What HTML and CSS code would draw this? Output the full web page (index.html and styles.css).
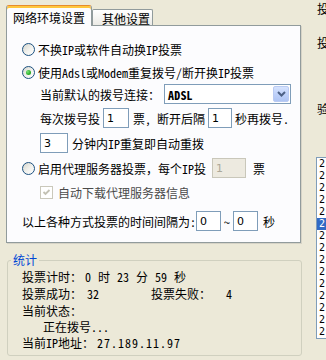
FILE: index.html
```html
<!DOCTYPE html>
<html lang="zh-CN">
<head>
<meta charset="utf-8">
<title>投票设置</title>
<link rel="stylesheet" href="styles.css">
</head>
<body>
<div class="app">
  <div class="left">
    <div class="tabs">
      <div class="tab tab-active">网络环境设置</div>
      <div class="tab tab-inactive">其他设置</div>
    </div>
    <div class="panel">
      <div class="row r1 ind-radio">
        <span class="radio"></span><span>不换IP或软件自动换IP投票</span>
      </div>
      <div class="row r2 ind-radio">
        <span class="radio on"></span><span>使用Adsl或Modem重复拨号/断开换IP投票</span>
      </div>
      <div class="row r3 ind-sub">
        <span>当前默认的拨号连接：</span>
        <div class="combo">
          <span class="combo-text">ADSL</span>
          <span class="combo-btn">
            <svg width="9" height="6" viewBox="0 0 9 6"><path d="M1 1 L4.5 4.5 L8 1" fill="none" stroke="#4D6185" stroke-width="2"/></svg>
          </span>
        </div>
      </div>
      <div class="row r4 ind-sub">
        <span>每次拨号投</span>
        <span class="input in-a">1</span>
        <span class="t-after">票, 断开后隔</span>
        <span class="input in-b">1</span>
        <span class="t-after2">秒再拨号.</span>
      </div>
      <div class="row r5 ind-sub">
        <span class="input in-c">3</span>
        <span class="t-after">分钟内IP重复即自动重拨</span>
      </div>
      <div class="row r6 ind-radio">
        <span class="radio"></span><span>启用代理服务器投票，每个IP投</span>
        <span class="input disabled in-d">1</span>
        <span class="t-piao">票</span>
      </div>
      <div class="row r7 ind-sub">
        <span class="check">
          <svg width="11" height="11" viewBox="0 0 11 11"><path d="M2.5 5 L4.5 7 L8.5 3" fill="none" stroke="#C3C1B4" stroke-width="1.8"/></svg>
        </span>
        <span class="t-dim">自动下载代理服务器信息</span>
      </div>
      <div class="row r8 ind-radio">
        <span>以上各种方式投票的时间间隔为:</span>
        <span class="input in-e">0</span>
        <span class="tilde">~</span>
        <span class="input in-e">0</span>
        <span class="t-sec">秒</span>
      </div>
    </div>
    <fieldset class="group">
      <legend>统计</legend>
      <div class="srow s1"><span class="lbl">投票计时：</span><span class="val v-time">0 时 23 分 59 秒</span></div>
      <div class="srow s2"><span class="lbl">投票成功：</span><span class="val v-ok">32</span><span class="lbl lbl-fail">投票失败：</span><span class="val v-fail">4</span></div>
      <div class="srow s3"><span class="lbl">当前状态：</span></div>
      <div class="srow s4"><span class="status">正在拨号...</span></div>
      <div class="srow s5"><span class="lbl">当前IP地址：</span><span class="val v-ip">27.189.11.97</span></div>
    </fieldset>
  </div>
  <div class="right">
    <div class="cut c1">投</div>
    <div class="cut c2">投</div>
    <div class="cut c3">验</div>
    <div class="listbox">
      <div class="item">2</div>
      <div class="item">2</div>
      <div class="item">2</div>
      <div class="item">2</div>
      <div class="item">2</div>
      <div class="item sel">2</div>
      <div class="item">2</div>
      <div class="item">2</div>
      <div class="item">2</div>
      <div class="item">2</div>
      <div class="item">2</div>
      <div class="item">2</div>
      <div class="item">2</div>
      <div class="item">2</div>
      <div class="item">2</div>
    </div>
  </div>
</div>
</body>
</html>
```
FILE: styles.css
```css
* { box-sizing: border-box; }
html, body { margin: 0; padding: 0; }
body {
  width: 326px;
  height: 360px;
  overflow: hidden;
  background: #ECE9D8;
  font-family: "Noto Sans Mono CJK SC", "Noto Sans CJK SC", monospace;
  font-size: 12px;
  color: #000;
}
.app { display: flex; align-items: flex-start; width: 326px; overflow: hidden; }
.left { flex: none; width: 296px; margin-left: 6px; padding-top: 5px; }

/* tabs */
.tabs { display: flex; height: 21px; margin-bottom: -1px; position: relative; z-index: 1; }
.tab { display: flex; align-items: center; white-space: nowrap; }
.tab-active {
  width: 86px; height: 21px;
  background: #FCFCFE;
  border: 1px solid #919B9C;
  border-top-color: #E68B2C;
  border-bottom: none;
  border-radius: 3px 3px 0 0;
  box-shadow: inset 0 2px 0 #FFC73C;
  justify-content: center;
  padding-top: 2px;
}
.tab-inactive {
  width: 61px; height: 16px; margin-top: 4px;
  background: linear-gradient(#FFFFFF, #ECEBE6);
  border: 1px solid #919B9C;
  border-bottom: none;
  border-radius: 2px 2px 0 0;
  padding-left: 9px;
  padding-top: 1px;
}

/* panel */
.panel {
  width: 295px; height: 218px;
  background: #FCFCFE;
  border: 1px solid #919B9C;
  box-shadow: 1px 1px 0 #D6D3C6;
}
.row { display: flex; align-items: center; height: 20px; white-space: nowrap; }
.ind-radio { padding-left: 15px; }
.ind-sub { padding-left: 33px; }
.r1 { margin-top: 13px; }
.r2 { margin-top: 3px; }
.r3 { margin-top: 2px; }
.r4 { margin-top: 4px; }
.r5 { margin-top: 5px; }
.r6 { margin-top: 5px; }
.r7 { margin-top: 4px; }
.r8 { margin-top: 9px; }

.radio {
  flex: none;
  width: 13px; height: 13px;
  margin-right: 3px;
  border-radius: 50%;
  border: 1px solid #1C5180;
  background: linear-gradient(135deg, #D6D6CE 0%, #F2F2EE 55%, #FFFFFF 100%);
  display: flex; align-items: center; justify-content: center;
}
.radio.on::after {
  content: "";
  width: 5px; height: 5px;
  border-radius: 50%;
  background: radial-gradient(circle at 35% 35%, #7BE27A 0%, #2FB32C 55%, #168E16 100%);
}

.combo {
  margin-left: 4px;
  width: 127px; height: 20px;
  border: 1px solid #7F9DB9;
  background: #FFFFFF;
  display: flex; align-items: center;
  padding: 0 1px 0 3px;
}
.combo-text { font-weight: bold; font-size: 12px; letter-spacing: 0.2px; }
.combo-btn {
  margin-left: auto;
  width: 16px; height: 16px;
  border: 1px solid #BACBF3;
  border-radius: 2px;
  background: linear-gradient(#D6E3FE 0%, #C0D2FA 50%, #AFC5F4 100%);
  display: flex; align-items: center; justify-content: center;
}

.input {
  flex: none;
  height: 20px;
  border: 1px solid #7F9DB9;
  background: #FFFFFF;
  font-family: "DejaVu Sans", "Liberation Sans", sans-serif;
  font-size: 11px;
  display: flex; align-items: center;
  padding-left: 3px;
}
.input.disabled { background: #EDEAE0; border-color: #C9C7BA; color: #ACA899; }
.in-a { width: 26px; margin-left: 3px; }
.in-b { width: 24px; margin-left: 3px; }
.in-c { width: 28px; }
.in-d { width: 34px; margin-left: 6px; }
.in-e { width: 25px; }
.t-after { margin-left: 4px; }
.t-after2 { margin-left: 3px; }
.t-piao { margin-left: 7px; }
.r8 .in-e:first-of-type { margin-left: 2px; }
.tilde { margin: 0 3px; }
.t-sec { margin-left: 5px; }

.check {
  flex: none;
  width: 13px; height: 13px;
  border: 1px solid #CAC8BB;
  background: #FFFFFF;
  margin-right: 5px;
  display: flex; align-items: center; justify-content: center;
}
.t-dim { color: #4A4A4A; }

/* group box */
.group {
  margin: 10px 0 0 1px;
  width: 295px; height: 103px;
  border: 1px solid #D0D0BF;
  border-radius: 3px;
  padding: 1px 0 0 14px;
  min-width: 0;
}
.group legend {
  padding: 0 2px;
  margin-left: -11px;
  line-height: 14px;
  color: #0046D5;
}
.srow { display: flex; align-items: center; height: 17px; white-space: nowrap; }
.s4 { height: 15px; }
.val { margin-left: 3px; }
.v-time { word-spacing: 1px; }
.v-ok { margin-left: 5px; }
.v-ip { margin-left: 3px; letter-spacing: 1px; }
.lbl-fail { margin-left: 52px; }
.v-fail { margin-left: 15px; }
.status { padding-left: 21px; }

/* right column (clipped by the window edge) */
.right { flex: none; width: 10px; margin-left: 14px; overflow: hidden; }
.cut { height: 14px; line-height: 14px; padding-left: 1px; white-space: nowrap; }
.c1 { margin-top: 2px; }
.c2 { margin-top: 20px; }
.c3 { margin-top: 52px; }
.listbox {
  margin-top: 41px;
  width: 30px; height: 182px;
  border: 1px solid #7F9DB9;
  background: #FFFFFF;
  overflow: hidden;
}
.item {
  height: 12px; line-height: 12px; padding-left: 2px; white-space: nowrap;
  font-family: "DejaVu Sans Mono", "Liberation Mono", monospace;
  font-size: 10px;
}
.item.sel { background: #316AC5; color: #FFFFFF; }
```
